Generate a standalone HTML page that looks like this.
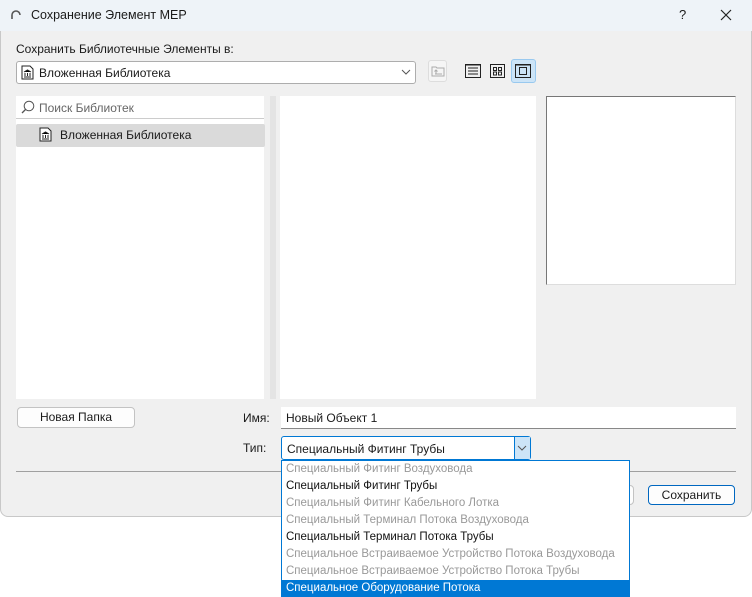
<!DOCTYPE html>
<html><head><style>
*{box-sizing:border-box;margin:0;padding:0}
body{width:752px;height:597px;background:#fff;font-family:"Liberation Sans",sans-serif;font-size:12px;color:#1a1a1a;position:relative;overflow:hidden}
.a{position:absolute}
.win{left:0;top:0;width:752px;height:517px;background:#f0f0f0;border:1px solid #c8c8c8;border-radius:8px;overflow:hidden}
.title{left:0;top:0;width:752px;height:31px;background:#eef3f8}
.box{background:#fff}
.dd div{height:17px;line-height:17px;padding-left:4px;color:#999;white-space:nowrap;font-size:11.5px}
.dd .b{color:#111}
.dd .s{background:#0078d4;color:#fff}
</style></head><body>
<div class="a win"></div>
<div class="a title"></div>
<svg class="a" style="left:10px;top:9px" width="12" height="12"><path d="M2 10 V6 A4 4 0 0 1 10 6" fill="none" stroke="#555" stroke-width="1.6"/></svg>
<div class="a" style="left:31px;top:8px;font-size:12.5px">Сохранение Элемент MEP</div>
<div class="a" style="left:679px;top:7px;font-size:13px">?</div>
<svg class="a" style="left:720px;top:9px" width="12" height="12"><path d="M1 1L11 11M11 1L1 11" stroke="#222" stroke-width="1.2"/></svg>
<div class="a" style="left:16px;top:42px">Сохранить Библиотечные Элементы в:</div>
<div class="a box" style="left:16px;top:61px;width:400px;height:23px;border:1px solid #adadad;border-radius:3px"></div>
<svg class="a" style="left:21px;top:65px" width="13" height="15"><path d="M1 1H9L12 4V14H1Z" fill="#fff" stroke="#222"/><path d="M3 7L6.5 5L10 7M4 8V11M6.5 8V11M9 8V11M3 12H10" stroke="#222"/></svg>
<div class="a" style="left:39px;top:66px">Вложенная Библиотека</div>
<svg class="a" style="left:401px;top:69px" width="10" height="6"><path d="M1 1L5 5L9 1" fill="none" stroke="#555"/></svg>
<div class="a" style="left:428px;top:60px;width:19px;height:22px;border:1px solid #ddd;border-radius:3px;background:#f5f5f5"></div>
<svg class="a" style="left:431px;top:65px" width="14" height="12"><path d="M1 2H5L6 3H13V11H1Z" fill="none" stroke="#aaa"/><path d="M4 9H11M5 9V5M3.5 6.5L5 5L6.5 6.5" fill="none" stroke="#aaa"/></svg>
<svg class="a" style="left:465px;top:64px" width="17" height="15"><rect x=".5" y=".5" width="15" height="13" fill="none" stroke="#222"/><path d="M0 1H16M3 4H13M3 7H13M3 10H13" stroke="#222"/></svg>
<svg class="a" style="left:490px;top:64px" width="16" height="15"><rect x=".5" y=".5" width="14" height="13" fill="none" stroke="#222"/><rect x="3.5" y="3.5" width="3" height="3" fill="none" stroke="#222"/><rect x="8.5" y="3.5" width="3" height="3" fill="none" stroke="#222"/><rect x="3.5" y="8" width="3" height="3" fill="none" stroke="#222"/><rect x="8.5" y="8" width="3" height="3" fill="none" stroke="#222"/></svg>
<div class="a" style="left:511px;top:59px;width:25px;height:24px;background:#cce4f7;border:1px solid #99c9ef;border-radius:3px"></div>
<svg class="a" style="left:515px;top:64px" width="17" height="15"><rect x=".5" y=".5" width="15" height="13" fill="none" stroke="#222"/><path d="M0 1H16" stroke="#222"/><rect x="4.5" y="3.5" width="7" height="7" fill="none" stroke="#222"/></svg>
<div class="a box" style="left:16px;top:96px;width:248px;height:303px"></div>
<div class="a" style="left:16px;top:96px;width:248px;height:23px;border-bottom:1px solid #ccc;background:#fff"></div>
<svg class="a" style="left:21px;top:100px" width="14" height="14"><circle cx="8" cy="6" r="4.8" fill="none" stroke="#555"/><path d="M4.5 9.5L1 13" stroke="#555" stroke-width="1.3"/></svg>
<div class="a" style="left:39px;top:101px;color:#666">Поиск Библиотек</div>
<div class="a" style="left:16px;top:124px;width:249px;height:23px;background:#dadada;border-radius:2px"></div>
<svg class="a" style="left:39px;top:127px" width="13" height="15"><path d="M1 1H9L12 4V14H1Z" fill="#fff" stroke="#222"/><path d="M3 7L6.5 5L10 7M4 8V11M6.5 8V11M9 8V11M3 12H10" stroke="#222"/></svg>
<div class="a" style="left:60px;top:128px">Вложенная Библиотека</div>
<div class="a" style="left:270px;top:96px;width:6px;height:303px;background:#e4e4e4"></div>
<div class="a box" style="left:280px;top:96px;width:256px;height:303px"></div>
<div class="a box" style="left:546px;top:96px;width:190px;height:189px;border:1px solid #777;border-right-color:#ddd;border-bottom-color:#ddd"></div>
<div class="a" style="left:17px;top:407px;width:118px;height:21px;border:1px solid #c3c3c3;border-radius:4px;background:#fdfdfd;text-align:center;line-height:19px">Новая Папка</div>
<div class="a" style="left:243px;top:411px">Имя:</div>
<div class="a box" style="left:281px;top:407px;width:455px;height:22px;border-bottom:1px solid #888;padding:4px 5px">Новый Объект 1</div>
<div class="a" style="left:243px;top:441px">Тип:</div>
<div class="a box" style="left:281px;top:436px;width:250px;height:24px;border:1px solid #0078d4;border-radius:3px;padding:5px 5px">Специальный Фитинг Трубы</div>
<div class="a" style="left:514px;top:437px;width:16px;height:22px;background:#cce4f7;border-left:1px solid #0078d4"></div>
<svg class="a" style="left:517px;top:445px" width="10" height="6"><path d="M1 1L5 5L9 1" fill="none" stroke="#555"/></svg>
<div class="a" style="left:16px;top:471px;width:720px;height:1px;background:#a0a0a0"></div>
<div class="a" style="left:600px;top:485px;width:34px;height:20px;border:1px solid #c3c3c3;border-radius:4px;background:#fdfdfd"></div>
<div class="a" style="left:648px;top:485px;width:87px;height:20px;border:1px solid #0067c0;border-radius:4px;background:#fdfdfd;text-align:center;line-height:18px">Сохранить</div>
<div class="a box dd" style="left:281px;top:460px;width:349px;height:137px;border:1px solid #0078d4;border-bottom:none">
<div>Специальный Фитинг Воздуховода</div>
<div class="b">Специальный Фитинг Трубы</div>
<div>Специальный Фитинг Кабельного Лотка</div>
<div>Специальный Терминал Потока Воздуховода</div>
<div class="b">Специальный Терминал Потока Трубы</div>
<div>Специальное Встраиваемое Устройство Потока Воздуховода</div>
<div>Специальное Встраиваемое Устройство Потока Трубы</div>
<div class="s">Специальное Оборудование Потока</div>
</div>
</body></html>
